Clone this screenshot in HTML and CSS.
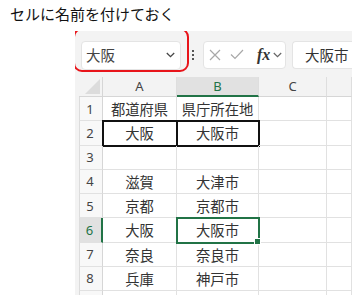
FILE: index.html
```html
<!DOCTYPE html>
<html lang="ja">
<head>
<meta charset="utf-8">
<link rel="stylesheet" href="styles.css">
</head>
<body>
<div class="page">
  <div class="title">セルに名前を付けておく</div>
  <div class="excel">
    <div class="toolbar">
      <div class="namebox">
        <span>大阪</span>
        <svg class="chev" width="9" height="6" viewBox="0 0 9 6"><path d="M0.8 1 L4.5 4.6 L8.2 1" fill="none" stroke="#444" stroke-width="1.3"/></svg>
      </div>
      <div class="dots"><i></i><i></i><i></i></div>
      <div class="fxbox">
        <svg width="12" height="12" viewBox="0 0 12 12"><path d="M1 1 L11 11 M11 1 L1 11" stroke="#a8a8a8" stroke-width="1.2" fill="none"/></svg>
        <svg width="14" height="11" viewBox="0 0 14 11"><path d="M1 5.5 L5 9.5 L13 1" stroke="#a8a8a8" stroke-width="1.2" fill="none"/></svg>
        <span class="fx">fx</span>
        <svg class="chev2" width="9" height="6" viewBox="0 0 9 6"><path d="M0.8 1 L4.5 4.6 L8.2 1" fill="none" stroke="#666" stroke-width="1.2"/></svg>
      </div>
      <div class="formula">大阪市</div>
      <div class="mark"></div>
    </div>
    <div class="sheet">
      <div class="corner"><div class="tri"></div></div>
      <div class="ch">A</div>
      <div class="ch sel">B</div>
      <div class="ch">C</div>
      <div class="ch"></div>

      <div class="rh">1</div><div class="c">都道府県</div><div class="c">県庁所在地</div><div class="c"></div><div class="c"></div>
      <div class="rh">2</div><div class="c bx">大阪</div><div class="c bx">大阪市</div><div class="c"></div><div class="c"></div>
      <div class="rh">3</div><div class="c"></div><div class="c"></div><div class="c"></div><div class="c"></div>
      <div class="rh">4</div><div class="c">滋賀</div><div class="c">大津市</div><div class="c"></div><div class="c"></div>
      <div class="rh">5</div><div class="c">京都</div><div class="c">京都市</div><div class="c"></div><div class="c"></div>
      <div class="rh sel">6</div><div class="c">大阪</div><div class="c active">大阪市</div><div class="c"></div><div class="c"></div>
      <div class="rh">7</div><div class="c">奈良</div><div class="c">奈良市</div><div class="c"></div><div class="c"></div>
      <div class="rh">8</div><div class="c">兵庫</div><div class="c">神戸市</div><div class="c"></div><div class="c"></div>
      <div class="rh"></div><div class="c"></div><div class="c"></div><div class="c"></div><div class="c"></div>
    </div>
  </div>
</div>
</body>
</html>
```

FILE: styles.css
```css
* { box-sizing: border-box; }
html, body { margin: 0; padding: 0; background: #fff; }
body { width: 352px; height: 295px; overflow: hidden; font-family: "Noto Sans CJK JP", "Noto Sans", sans-serif; }

.page { display: flex; flex-direction: column; }

.title {
  font-size: 15px;
  line-height: 20px;
  color: #111;
  padding: 4px 0 0 10px;
  height: 31px;
  flex-shrink: 0;
}

.excel {
  margin-left: 75px;
  background: #f3f3f3;
  height: 264px;
  display: flex;
  flex-direction: column;
  overflow: hidden;
  flex-shrink: 0;
}

.toolbar {
  position: relative;
  display: flex;
  align-items: center;
  height: 46px;
  flex-shrink: 0;
  padding: 0 0 0 6px;
}

.namebox {
  width: 100px;
  height: 29px;
  background: #fff;
  border: 1px solid #e4e4e4;
  border-radius: 4px;
  display: flex;
  align-items: center;
  justify-content: space-between;
  padding: 0 5px 0 4px;
  font-size: 14.5px;
  color: #444;
  margin-top: 2px;
}
.namebox span { line-height: 20px; }

.dots {
  width: 22px;
  display: flex;
  flex-direction: column;
  align-items: center;
  gap: 2px;
  margin-top: 2px;
  padding-left: 2px;
}
.dots i { display: block; width: 2px; height: 2px; background: #555; }

.fxbox {
  width: 83px;
  height: 28px;
  background: #fff;
  border: 1px solid #e4e4e4;
  border-radius: 4px;
  display: flex;
  align-items: center;
  padding: 0 0 0 5px;
  margin-top: 1px;
}
.fxbox svg:nth-child(1) { margin-right: 9px; }
.fxbox svg:nth-child(2) { margin-right: 13px; }
.fx {
  font-family: "Liberation Serif", serif;
  font-style: italic;
  font-weight: bold;
  font-size: 16px;
  color: #333;
  line-height: 16px;
  margin-right: 3px;
}

.formula {
  margin-left: 6px;
  flex: 1;
  height: 28px;
  background: #fff;
  border: 1px solid #e4e4e4;
  border-right: none;
  border-radius: 4px 0 0 4px;
  font-size: 14.5px;
  color: #333;
  padding: 0 0 0 12px;
  display: flex;
  align-items: center;
  margin-top: 1px;
}

.mark {
  position: absolute;
  left: -2px;
  top: -3px;
  width: 116px;
  height: 44px;
  border: 2px solid #e8141a;
  border-radius: 9px;
}

.sheet {
  margin-left: 4px;
  background: #fff;
  display: grid;
  grid-template-columns: 24px 74px 82px 68px 1fr;
  grid-template-rows: 20px repeat(9, 24.25px);
  flex-shrink: 0;
}

.corner {
  background: #f3f3f3;
  border-right: 1px solid #d6d6d6;
  border-bottom: 1px solid #d6d6d6;
  position: relative;
  overflow: hidden;
}
.tri {
  position: absolute;
  right: 2px;
  bottom: 2px;
  width: 0; height: 0;
  border-left: 15px solid transparent;
  border-bottom: 15px solid #dcdcdc;
}

.ch {
  background: #f3f3f3;
  border-right: 1px solid #dedede;
  border-bottom: 1px solid #d6d6d6;
  font-family: "Noto Sans", sans-serif;
  font-size: 13px;
  color: #444;
  display: flex;
  align-items: center;
  justify-content: center;
  padding-bottom: 1px;
}
.ch.sel {
  background: #e1e1e1;
  color: #217346;
  border-bottom: 2px solid #217346;
}

.rh {
  background: #f8f8f8;
  border-left: 1px solid #dcdcdc;
  border-right: 1px solid #d6d6d6;
  border-bottom: 1px solid #e1e1e1;
  font-family: "Noto Sans", sans-serif;
  font-size: 13px;
  color: #444;
  display: flex;
  align-items: center;
  justify-content: center;
  padding-right: 2px;
}
.rh.sel {
  background: #e1e1e1;
  color: #217346;
  border-right: 2px solid #217346;
}

.c {
  border-right: 1px solid #e1e1e1;
  border-bottom: 1px solid #e1e1e1;
  font-size: 14.3px;
  color: #333;
  display: flex;
  align-items: center;
  justify-content: center;
  white-space: nowrap;
}

.bx {
  outline: 2px solid #111;
  outline-offset: -1px;
}

.active {
  position: relative;
  outline: 2px solid #217346;
  outline-offset: -1px;
}
.active::after {
  content: "";
  position: absolute;
  right: -3px;
  bottom: -3px;
  width: 5px;
  height: 5px;
  background: #217346;
  border: 1px solid #fff;
}
```
